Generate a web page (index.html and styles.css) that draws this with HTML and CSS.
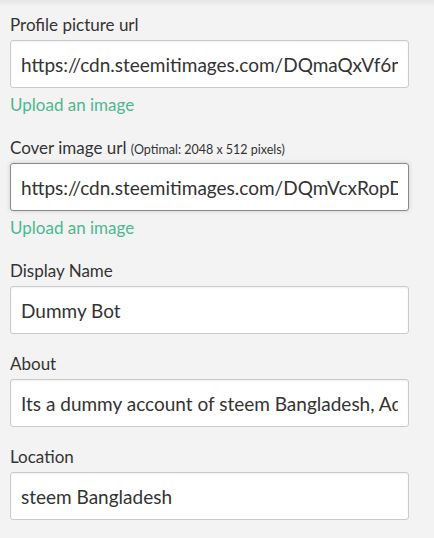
FILE: index.html
```html
<!DOCTYPE html>
<html>
<head>
<meta charset="utf-8">
<link rel="stylesheet" href="styles.css">
</head>
<body>
<form class="settings">
  <div class="field">
    <label class="label">Profile picture url</label>
    <input class="input" type="text" value="https://cdn.steemitimages.com/DQmaQxVf6nZm3rXvPqkNcd7sYhJw">
    <a class="upload">Upload an image</a>
  </div>
  <div class="field">
    <label class="label">Cover image url <small class="hint">(Optimal: 2048 x 512 pixels)</small></label>
    <input class="input focused" type="text" value="https://cdn.steemitimages.com/DQmVcxRopDk8aBfLtWq2nYs">
    <a class="upload">Upload an image</a>
  </div>
  <div class="field">
    <label class="label">Display Name</label>
    <input class="input" type="text" value="Dummy Bot">
  </div>
  <div class="field">
    <label class="label">About</label>
    <input class="input" type="text" value="Its a dummy account of steem Bangladesh, Admin of the community">
  </div>
  <div class="field">
    <label class="label">Location</label>
    <input class="input" type="text" value="steem Bangladesh">
  </div>
</form>
</body>
</html>
```

FILE: styles.css
```css
html, body {
  margin: 0;
  padding: 0;
}
body {
  background: linear-gradient(#e6e6e6 0, #f3f3f3 7px, #f3f3f3 100%);
  min-height: 538px;
  font-family: "Lato", "Liberation Sans", sans-serif;
  color: #333;
}
.settings {
  display: flex;
  flex-direction: column;
  padding: 14px 25px 0 10px;
}
.field {
  display: flex;
  flex-direction: column;
  margin-bottom: 19px;
}
.label {
  font-size: 17px;
  line-height: 22px;
  margin-bottom: 4px;
  color: #333;
}
.hint {
  font-size: 12.5px;
  line-height: 1;
}
.input {
  box-sizing: border-box;
  width: 399px;
  height: 48px;
  margin: 0;
  padding: 0 10px;
  border: 1px solid #cacaca;
  border-radius: 3px;
  background: #fff;
  box-shadow: inset 0 1px 2px rgba(10,10,10,0.06);
  font-family: inherit;
  font-size: 19px;
  color: #333;
  outline: none;
}
.input.focused {
  border-color: #8a8a8a;
  box-shadow: 0 0 4px #cacaca;
}
.upload {
  color: #4cb890;
  font-size: 17px;
  line-height: 20px;
  margin: 7px 0 3px;
}
```
